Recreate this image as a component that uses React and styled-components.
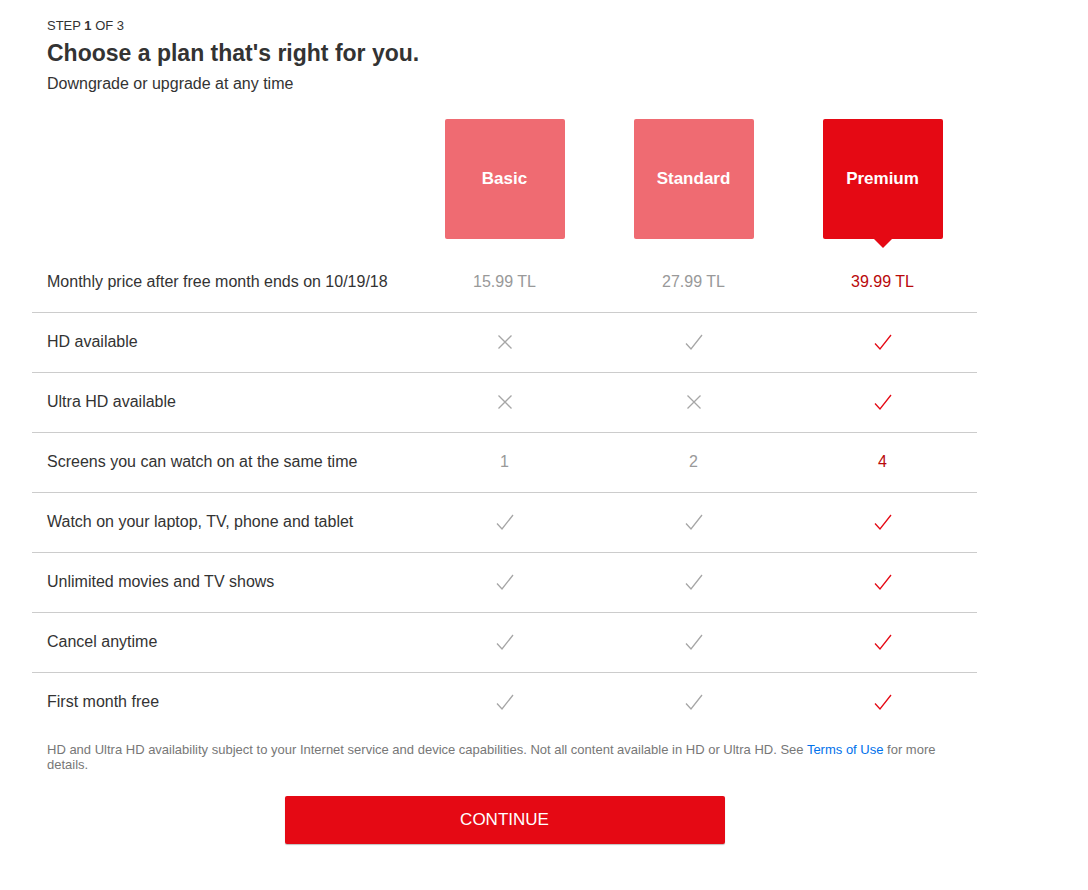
import React from 'react'
import styled, { createGlobalStyle } from 'styled-components'

const GlobalStyle = createGlobalStyle`
  body {
    margin: 0;
    background: #fff;
    font-family: "Liberation Sans", Arial, sans-serif;
    color: #333;
  }
`

const Page = styled.div`
  width: 945px;
  padding: 18px 0 40px 32px;
`

const Header = styled.div`
  padding-left: 15px;
`

const Step = styled.div`
  font-size: 13px;
  line-height: 16px;
  color: #333;
  b { font-weight: bold; }
`

const Title = styled.h1`
  margin: 5px 0 0;
  font-size: 23px;
  line-height: 28px;
  font-weight: bold;
  color: #333;
`

const Subtitle = styled.div`
  margin-top: 7px;
  font-size: 16px;
  line-height: 20px;
`

const Table = styled.div`
  margin-top: 25px;
  display: grid;
  grid-template-columns: 378px repeat(3, 189px);
`

const BoxCell = styled.div`
  display: flex;
  justify-content: center;
  padding-bottom: 13px;
`

const PlanBox = styled.div`
  position: relative;
  width: 120px;
  height: 120px;
  border-radius: 2px;
  background: ${(p) => (p.selected ? '#e50914' : '#ef6b72')};
  color: #fff;
  font-weight: bold;
  font-size: 17px;
  display: flex;
  align-items: center;
  justify-content: center;

  &::after {
    content: '';
    display: ${(p) => (p.selected ? 'block' : 'none')};
    position: absolute;
    left: 50%;
    bottom: -9px;
    margin-left: -9px;
    border-left: 9px solid transparent;
    border-right: 9px solid transparent;
    border-top: 9px solid #e50914;
  }
`

const Row = styled.div`
  display: contents;
`

const Cell = styled.div`
  height: ${(p) => (p.first ? '61px' : '60px')};
  padding-bottom: ${(p) => (p.first ? '1px' : '2px')};
  display: flex;
  align-items: center;
  font-size: 16px;
  border-bottom: ${(p) => (p.last ? 'none' : '1px solid #ccc')};
  box-sizing: border-box;
`

const Label = styled(Cell)`
  padding-left: 15px;
  color: #333;
`

const Value = styled(Cell)`
  justify-content: center;
  color: ${(p) => (p.selected ? '#b9090b' : '#999')};
`

const Note = styled.p`
  margin: 9px 0 0;
  padding-left: 15px;
  font-size: 13px;
  line-height: 15px;
  color: #777;

  a {
    color: #0071eb;
    text-decoration: none;
  }
`

const ButtonWrap = styled.div`
  display: flex;
  justify-content: center;
  margin-top: 24px;
`

const ContinueButton = styled.button`
  width: 440px;
  height: 48px;
  border: none;
  border-radius: 2px;
  background: #e50914;
  color: #fff;
  font-family: "Liberation Sans", Arial, sans-serif;
  font-size: 17px;
  box-shadow: 0 1px 1px rgba(0, 0, 0, 0.25);
  cursor: pointer;
`

const Check = ({ color }) => (
  <svg width="20" height="18" viewBox="0 0 20 18">
    <path d="M2 10.5 L7 16 L18 2" fill="none" stroke={color} strokeWidth="1.3" />
  </svg>
)

const Cross = ({ color }) => (
  <svg width="16" height="16" viewBox="0 0 16 16">
    <path d="M1.5 1.5 L14.5 14.5 M14.5 1.5 L1.5 14.5" fill="none" stroke={color} strokeWidth="1.3" />
  </svg>
)

const plans = ['Basic', 'Standard', 'Premium']
const selectedIndex = 2

const rows = [
  { label: 'Monthly price after free month ends on 10/19/18', values: ['15.99 TL', '27.99 TL', '39.99 TL'] },
  { label: 'HD available', values: [false, true, true] },
  { label: 'Ultra HD available', values: [false, false, true] },
  { label: 'Screens you can watch on at the same time', values: ['1', '2', '4'] },
  { label: 'Watch on your laptop, TV, phone and tablet', values: [true, true, true] },
  { label: 'Unlimited movies and TV shows', values: [true, true, true] },
  { label: 'Cancel anytime', values: [true, true, true] },
  { label: 'First month free', values: [true, true, true] },
]

const renderValue = (value, selected) => {
  const color = selected ? '#e50914' : '#a6a6a6'
  if (value === true) return <Check color={color} />
  if (value === false) return <Cross color={color} />
  return value
}

const App = () => {
  return (
    <>
      <GlobalStyle />
      <Page>
        <Header>
          <Step>STEP <b>1</b> OF 3</Step>
          <Title>Choose a plan that's right for you.</Title>
          <Subtitle>Downgrade or upgrade at any time</Subtitle>
        </Header>

        <Table>
          <div />
          {plans.map((plan, index) => (
            <BoxCell key={plan}>
              <PlanBox selected={index === selectedIndex}>{plan}</PlanBox>
            </BoxCell>
          ))}

          {rows.map((row, rowIndex) => {
            const first = rowIndex === 0
            const last = rowIndex === rows.length - 1
            return (
              <Row key={row.label}>
                <Label first={first} last={last}>{row.label}</Label>
                {row.values.map((value, index) => (
                  <Value key={index} first={first} last={last} selected={index === selectedIndex}>
                    {renderValue(value, index === selectedIndex)}
                  </Value>
                ))}
              </Row>
            )
          })}
        </Table>

        <Note>
          HD and Ultra HD availability subject to your Internet service and device capabilities. Not all content available in HD or Ultra HD. See <a href="#">Terms of Use</a> for more details.
        </Note>

        <ButtonWrap>
          <ContinueButton>CONTINUE</ContinueButton>
        </ButtonWrap>
      </Page>
    </>
  )
}

export default App
